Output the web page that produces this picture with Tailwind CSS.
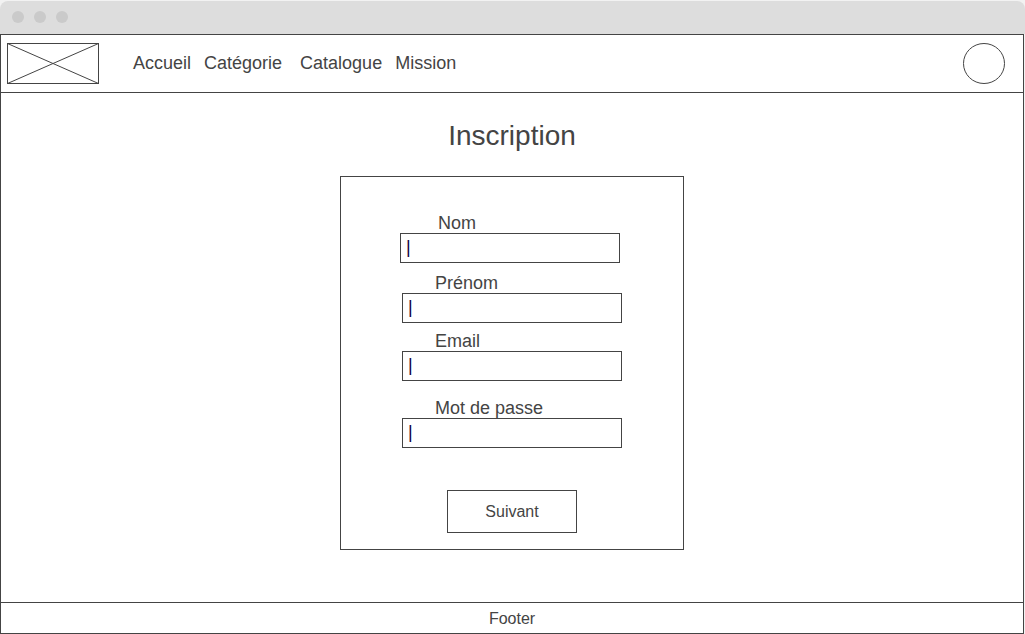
<!DOCTYPE html>
<html lang="fr">
<head>
<meta charset="utf-8">
<meta name="viewport" content="width=device-width, initial-scale=1">
<title>Inscription</title>
<script src="https://cdn.jsdelivr.net/npm/@tailwindcss/browser@4"></script>
</head>
<body class="flex min-h-screen flex-col bg-[#f2f2f2] pt-px font-['Liberation_Sans',Arial,sans-serif] text-lg/5 text-[#444444]">
  <div class="flex h-[33px] shrink-0 items-start gap-[10px] rounded-t-lg bg-[#dddddd] px-3 pt-[10px]" aria-hidden="true">
    <span class="size-3 rounded-full bg-[#cacaca]"></span>
    <span class="size-3 rounded-full bg-[#cacaca]"></span>
    <span class="size-3 rounded-full bg-[#cacaca]"></span>
  </div>
  <div class="mr-px flex grow flex-col border border-[#444444] bg-white">
    <header class="flex items-center justify-between border-b border-[#444444] py-2 pr-[18px] pl-[6px]">
      <div class="flex items-center gap-[34px]">
        <svg class="h-[41px] w-[92px]" viewBox="0 0 92 41" fill="none" stroke="#444444" role="img" aria-label="Logo">
          <rect x=".5" y=".5" width="91" height="40"/>
          <path d="M.5 .5 91.5 40.5M91.5 .5 .5 40.5"/>
        </svg>
        <nav class="flex gap-[13px] pb-[2px]">
          <a href="#">Accueil</a>
          <a href="#" class="mr-[5px]">Catégorie</a>
          <a href="#">Catalogue</a>
          <a href="#">Mission</a>
        </nav>
      </div>
      <a href="#" aria-label="Profil">
        <svg class="h-[41px] w-[42px]" viewBox="0 0 42 41" fill="none" stroke="#444444">
          <ellipse cx="21" cy="20.5" rx="20.5" ry="20"/>
        </svg>
      </a>
    </header>
    <main class="flex grow flex-col items-center pt-[25px] pb-[52px]">
      <h1 class="text-[28px]/9">Inscription</h1>
      <form class="mt-[22px] flex w-full max-w-[344px] grow flex-col border border-[#444444] px-[59px] pt-9 pb-4">
        <div class="flex flex-col pr-1">
          <label for="nom" class="pl-[38px]">Nom</label>
          <input id="nom" type="text" value="|" class="h-[30px] w-full border border-[#444444] px-[5px] pb-[2px] text-lg text-[#10003c] outline-none">
        </div>
        <div class="flex flex-col px-[2px]">
          <label for="prenom" class="mt-[10px] pl-[33px]">Prénom</label>
          <input id="prenom" type="text" value="|" class="h-[30px] w-full border border-[#444444] px-[5px] pb-[2px] text-lg text-[#10003c] outline-none">
          <label for="email" class="mt-2 pl-[33px]">Email</label>
          <input id="email" type="text" inputmode="email" value="|" class="h-[30px] w-full border border-[#444444] px-[5px] pb-[2px] text-lg text-[#10003c] outline-none">
          <label for="passe" class="mt-[17px] pl-[33px]">Mot de passe</label>
          <input id="passe" type="text" value="|" class="h-[30px] w-full border border-[#444444] px-[5px] pb-[2px] text-lg text-[#10003c] outline-none">
        </div>
        <button type="button" class="mt-auto h-[43px] w-[130px] self-center border border-[#444444] text-base">Suivant</button>
      </form>
    </main>
    <footer class="border-t border-[#444444] pt-[6px] pb-1 text-center text-base/5">Footer</footer>
  </div>
</body>
</html>
